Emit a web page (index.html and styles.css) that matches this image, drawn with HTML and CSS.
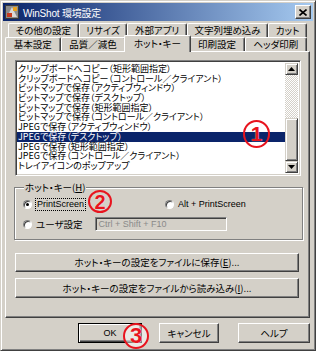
FILE: index.html
```html
<html>
  <head>
    <link rel="stylesheet" href="styles.css">
    <title>WinShot 環境設定</title>
  </head>
  <body>
    <div class="window">
      <div class="titlebar">
        <svg class="app-icon" width="14" height="14" viewBox="0 0 14 14">
          <rect x="0" y="0" width="14" height="14" fill="#3a3a3a"/>
          <rect x="1" y="1" width="12" height="12" fill="#8c8c8c"/>
          <path d="M2 12 L7 2 L12 12 Z" fill="#d8d8d8"/>
          <rect x="2" y="8" width="5" height="4" fill="#c83a1e"/>
          <rect x="8" y="2" width="4" height="4" fill="#e8a020"/>
        </svg>
        <span class="title">WinShot 環境設定</span>
        <span class="close">
          <svg width="8" height="7" viewBox="0 0 8 7">
            <path d="M0.5 0.5 L7.5 6.5 M7.5 0.5 L0.5 6.5" stroke="#000" stroke-width="1.6"/>
          </svg>
        </span>
      </div>

      <div class="content">
        <div class="tabs">
          <div class="tab-row back">
            <div class="tab">その他の設定</div>
            <div class="tab">リサイズ</div>
            <div class="tab">外部アプリ</div>
            <div class="tab">文字列埋め込み</div>
            <div class="tab">カット</div>
          </div>
          <div class="tab-row front">
            <div class="tab">基本設定</div>
            <div class="tab">品質／減色</div>
            <div class="tab selected">ホット・キー</div>
            <div class="tab">印刷設定</div>
            <div class="tab">ヘッダ印刷</div>
          </div>
        </div>

        <div class="panel">
          <div class="listbox">
            <ul class="items">
              <li>クリップボードへコピー（矩形範囲指定）</li>
              <li>クリップボードへコピー（コントロール／クライアント）</li>
              <li>ビットマップで保存（アクティブウィンドウ）</li>
              <li>ビットマップで保存（デスクトップ）</li>
              <li>ビットマップで保存（矩形範囲指定）</li>
              <li>ビットマップで保存（コントロール／クライアント）</li>
              <li>JPEGで保存（アクティブウィンドウ）</li>
              <li class="active">JPEGで保存（デスクトップ）</li>
              <li>JPEGで保存（矩形範囲指定）</li>
              <li>JPEGで保存（コントロール／クライアント）</li>
              <li>トレイアイコンのポップアップ</li>
            </ul>
            <div class="scrollbar">
              <div class="arrow">
                <svg width="7" height="4" viewBox="0 0 7 4"><path d="M3.5 0 L7 4 L0 4 Z" fill="#000"/></svg>
              </div>
              <div class="track"></div>
              <div class="thumb"></div>
              <div class="arrow">
                <svg width="7" height="4" viewBox="0 0 7 4"><path d="M0 0 L7 0 L3.5 4 Z" fill="#000"/></svg>
              </div>
            </div>
          </div>

          <div class="group">
            <div class="group-title">ホット・キー(<u>H</u>)</div>
            <div class="radio-row">
              <span class="radio"><span class="dot checked"></span><span class="focus latin">PrintScreen</span></span>
              <span class="radio alt"><span class="dot"></span><span class="latin">Alt + PrintScreen</span></span>
            </div>
            <div class="radio-row">
              <span class="radio"><span class="dot"></span>ユーザ設定</span>
              <span class="edit">Ctrl + Shift + F10</span>
            </div>
          </div>

          <div class="btn wide save">ホット・キーの設定をファイルに保存(<u>E</u>)...</div>
          <div class="btn wide load">ホット・キーの設定をファイルから読み込み(<u>I</u>)...</div>
        </div>

        <div class="footer">
          <div class="btn ok">OK</div>
          <div class="btn cancel">キャンセル</div>
          <div class="btn help">ヘルプ</div>
        </div>
      </div>

      <span class="mark mark-1">1</span>
      <span class="mark mark-2">2</span>
      <span class="mark mark-3">3</span>
    </div>
  </body>
</html>
```

FILE: styles.css
```css
body {
  margin: 0;
  background: #d4d0c8;
  font-family: "Noto Sans CJK JP", "Liberation Sans", sans-serif;
  font-size: 9.5px;
  font-feature-settings: "palt";
  color: #000;
}

.window {
  position: relative;
  width: 316px;
  height: 351px;
  box-sizing: border-box;
  background: #d4d0c8;
  border: 1px solid;
  border-color: #d4d0c8 #404040 #404040 #d4d0c8;
  box-shadow: inset 1px 1px #fff, inset -1px -1px #808080;
  padding: 2px;
  display: flex;
  flex-direction: column;
}

/* title bar */
.titlebar {
  height: 18px;
  display: flex;
  align-items: center;
  gap: 4px;
  padding: 0 2px 0 2px;
  background: linear-gradient(to right, #0a246a, #a6caf0);
  color: #fff;
}
.title {
  flex: 1;
  font-size: 10px;
  font-family: "Liberation Sans", "Noto Sans CJK JP", sans-serif;
  letter-spacing: -0.2px;
}
.close {
  width: 16px;
  height: 14px;
  box-sizing: border-box;
  background: #d4d0c8;
  border: 1px solid;
  border-color: #fff #404040 #404040 #fff;
  box-shadow: inset -1px -1px #808080;
  display: flex;
  align-items: center;
  justify-content: center;
}

.content {
  padding: 2px 3px 0 2px;
  display: flex;
  flex-direction: column;
}

/* tabs */
.tabs {
  margin-right: 3px;
}
.tab-row {
  display: flex;
  height: 14px;
}
.tab-row.back {
  margin-left: 3px;
}
.tab {
  flex: 1 1 auto;
  box-sizing: border-box;
  text-align: center;
  line-height: 12px;
  white-space: nowrap;
  background: #d4d0c8;
  border-top: 1px solid #fff;
  border-left: 1px solid #fff;
  border-right: 1px solid #404040;
  border-radius: 2px 2px 0 0;
  box-shadow: inset -1px 0 #808080;
}
.tab.selected {
  position: relative;
  z-index: 1;
  height: 17px;
  margin: -2px -2px 0 -2px;
  padding-top: 1px;
  flex-grow: 1.2;
}

/* panel */
.panel {
  height: 267px;
  box-sizing: border-box;
  border: 1px solid;
  border-color: #fff #404040 #404040 #fff;
  box-shadow: inset -1px -1px #808080;
  padding: 8px 0 0 9px;
}

.listbox {
  position: relative;
  width: 286px;
  height: 116px;
  box-sizing: border-box;
  background: #fff;
  border: 1px solid;
  border-color: #808080 #fff #fff #808080;
  box-shadow: inset 1px 1px #404040, inset -1px -1px #d4d0c8;
  padding: 2px 2px 2px 1px;
  display: flex;
  overflow: hidden;
}
.items {
  flex: 1;
  list-style: none;
  margin: 0;
  padding: 1px 0 0 0;
  font-size: 9px;
}
.items li {
  height: 9.7px;
  line-height: 9.7px;
  padding-left: 1px;
  white-space: nowrap;
}
.items li.active {
  background: #0a246a;
  color: #fff;
}

.scrollbar {
  width: 13px;
  display: flex;
  flex-direction: column;
  background-color: #f4f3f1;
  background-image: repeating-conic-gradient(#d4d0c8 0 25%, #fff 0 50%);
  background-size: 2px 2px;
}
.scrollbar .arrow,
.scrollbar .thumb {
  box-sizing: border-box;
  background: #d4d0c8;
  border: 1px solid;
  border-color: #d4d0c8 #404040 #404040 #d4d0c8;
  box-shadow: inset 1px 1px #fff, inset -1px -1px #808080;
}
.scrollbar .arrow {
  height: 12px;
  display: flex;
  align-items: center;
  justify-content: center;
}
.scrollbar .track {
  height: 44px;
}
.scrollbar .thumb {
  height: 43px;
}

/* group box */
.group {
  width: 289px;
  height: 53px;
  box-sizing: border-box;
  margin: 11px 0 0 -1px;
  border: 1px solid #808080;
  box-shadow: 1px 1px #fff, inset 1px 1px #fff;
  padding: 0 0 0 8px;
}
.group-title {
  width: fit-content;
  margin: -6px 0 0 1px;
  padding: 0 1px;
  background: #d4d0c8;
  line-height: 11px;
}
.radio-row {
  display: flex;
  align-items: center;
  height: 20px;
}
.group-title + .radio-row {
  margin-top: 1px;
}
.radio {
  display: flex;
  align-items: center;
  gap: 4px;
  white-space: nowrap;
}
.radio.alt {
  margin-left: 80px;
}
.latin {
  font-family: "Liberation Sans", sans-serif;
  font-size: 9px;
}
.dot {
  width: 9px;
  height: 9px;
  box-sizing: border-box;
  border-radius: 50%;
  background: #fff;
  border: 1px solid;
  border-color: #808080 #fff #fff #808080;
  box-shadow: inset 1px 1px #404040;
  display: flex;
  align-items: center;
  justify-content: center;
}
.dot.checked::after {
  content: "";
  width: 3px;
  height: 3px;
  border-radius: 50%;
  background: #000;
}
.focus {
  outline: 1px dotted #000;
  padding: 0 1px;
  line-height: 11px;
}
.edit {
  margin-left: 12px;
  width: 132px;
  height: 14px;
  box-sizing: border-box;
  border: 1px solid;
  border-color: #808080 #fff #fff #808080;
  box-shadow: inset 1px 1px #404040;
  background: #d4d0c8;
  color: #8a8a8a;
  padding-left: 3px;
  line-height: 12px;
  font-family: "Liberation Sans", sans-serif;
  font-size: 9px;
}

/* buttons */
.btn {
  box-sizing: border-box;
  height: 20px;
  text-align: center;
  line-height: 18px;
  background: #d4d0c8;
  border: 1px solid;
  border-color: #fff #404040 #404040 #fff;
  box-shadow: inset -1px -1px #808080;
  white-space: nowrap;
}
.btn.wide {
  width: 284px;
}
.btn.save {
  margin-top: 13px;
  height: 19px;
  line-height: 17px;
}
.btn.load {
  margin-top: 6px;
}

.footer {
  display: flex;
  justify-content: flex-end;
  margin-top: 5px;
}
.footer .btn {
  height: 20px;
}
.btn.ok {
  width: 64px;
  border-color: #000;
  box-shadow: inset 1px 1px #fff, inset -1px -1px #404040, inset -2px -2px #808080;
  font-family: "Liberation Sans", sans-serif;
  font-size: 9px;
}
.btn.cancel {
  width: 60px;
  margin-left: 17px;
}
.btn.help {
  width: 72px;
  margin-left: 19px;
}

/* red annotation marks */
.mark {
  position: absolute;
  box-sizing: border-box;
  border: 2px solid #e8141e;
  border-radius: 50%;
  color: #e8141e;
  font-family: "Liberation Sans", sans-serif;
  font-weight: bold;
  text-align: center;
  text-shadow: 0 0 1px #fff;
}
.mark-1 {
  left: 242px;
  top: 119px;
  width: 27px;
  height: 28px;
  font-size: 21px;
  line-height: 24px;
}
.mark-2 {
  left: 87px;
  top: 189px;
  width: 24px;
  height: 23px;
  font-size: 20px;
  line-height: 20px;
}
.mark-3 {
  left: 122px;
  top: 322px;
  width: 26px;
  height: 26px;
  font-size: 22px;
  line-height: 22px;
  background: rgba(255, 255, 255, 0.5);
}
```
